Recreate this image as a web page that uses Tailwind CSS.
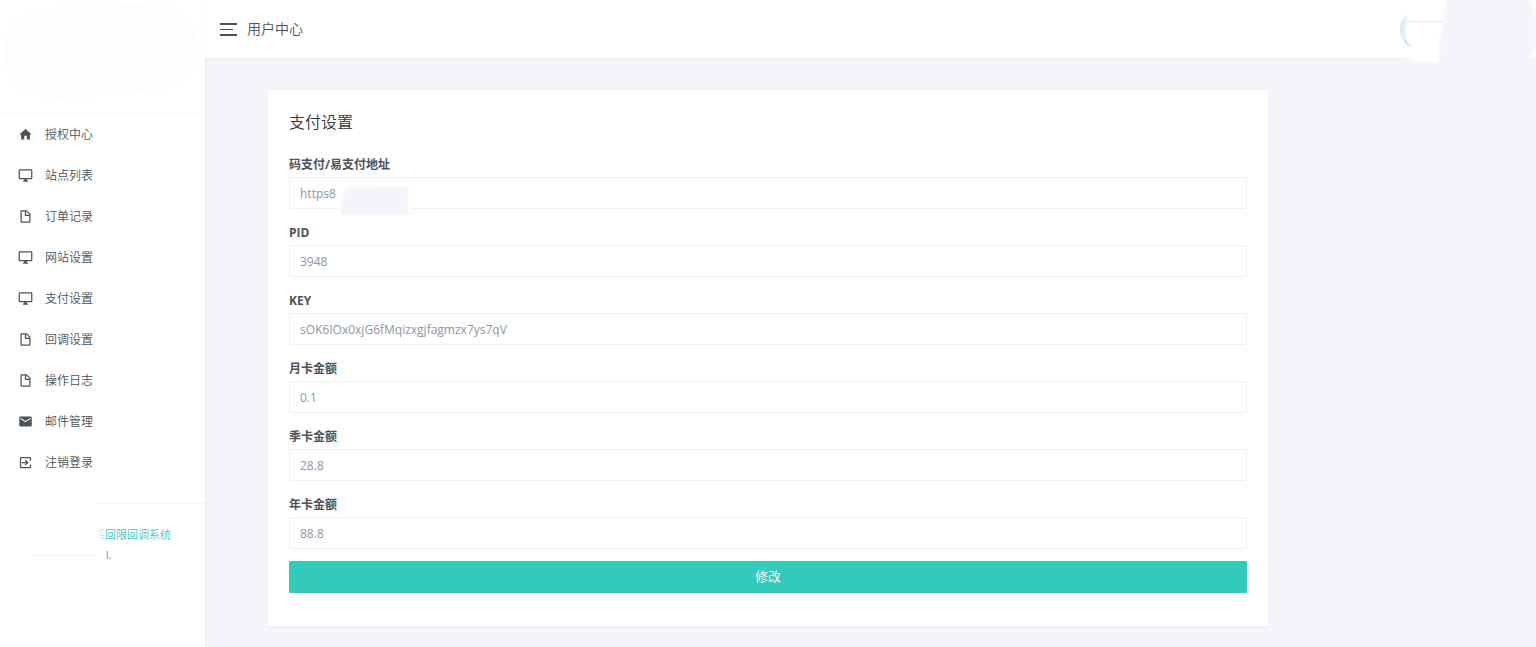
<!DOCTYPE html>
<html lang="zh-CN">

<head>
    <meta charset="UTF-8" />
    <meta name="viewport" content="width=device-width, initial-scale=1.0" />
    <title>用户中心 - 支付设置</title>
    <script src="https://cdn.jsdelivr.net/npm/@tailwindcss/browser@4"></script>
</head>

<body class="flex min-h-screen bg-[#f4f5fa] font-['Open_Sans','Noto_Sans_CJK_SC',sans-serif] text-xs font-[350] text-[#4d5259]">
    <!-- Icons -->
    <svg class="hidden">
        <symbol id="home" viewBox="0 0 24 24"><path d="M10 20v-6h4v6h5v-8h3L12 3 2 12h3v8z" /></symbol>
        <symbol id="monitor" viewBox="0 0 24 24"><path d="M21 16H3V4h18m0-2H3c-1.100 0-2 .9-2 2v12a2 2 0 0 0 2 2h7v2H8v2h8v-2h-2v-2h7a2 2 0 0 0 2-2V4a2 2 0 0 0-2-2z" /></symbol>
        <symbol id="file" viewBox="0 0 24 24"><path d="M13 9h5.500L13 3.500V9M6 2h8l6 6v12a2 2 0 0 1-2 2H6a2 2 0 0 1-2-2V4c0-1.110.89-2 2-2m5 2H6v16h12v-9h-7V4z" /></symbol>
        <symbol id="email" viewBox="0 0 24 24"><path d="M20 8l-8 5-8-5V6l8 5 8-5m0-2H4c-1.110 0-2 .89-2 2v12a2 2 0 0 0 2 2h16a2 2 0 0 0 2-2V6a2 2 0 0 0-2-2z" /></symbol>
        <symbol id="logout" viewBox="0 0 24 24"><path d="M21 9V5a2 2 0 0 0-2-2H5a2 2 0 0 0-2 2v14a2 2 0 0 0 2 2h14a2 2 0 0 0 2-2v-4h-2v4H5V5h14v4zM12.500 7.500L11 9l2 2H6v2h7l-2 2 1.500 1.500L17 12z" /></symbol>
    </svg>

    <!-- Sidebar -->
    <aside class="w-[205px] shrink-0 bg-white shadow-[0_0_4px_rgba(0,0,0,0.06)]">
        <div class="h-[113px] border-b border-[#f9f9fa]">
            <svg class="h-[104px] w-[205px]" viewBox="0 0 205 104">
                <path d="M40 8Q90 6 150 3Q196 4 199 50Q196 84 160 90Q120 94 60 100Q8 98 3 55Q6 14 40 8z" fill="#fdfdfd" />
            </svg>
        </div>
        <nav class="h-[390px] pt-px">
            <a href="#" class="flex h-[41px] items-center gap-3 pl-[18px]"><svg class="size-[15px] fill-current"><use href="#home" /></svg>授权中心</a>
            <a href="#" class="flex h-[41px] items-center gap-3 pl-[18px]"><svg class="size-[15px] fill-current"><use href="#monitor" /></svg>站点列表</a>
            <a href="#" class="flex h-[41px] items-center gap-3 pl-[18px]"><svg class="size-[15px] fill-current"><use href="#file" /></svg>订单记录</a>
            <a href="#" class="flex h-[41px] items-center gap-3 pl-[18px]"><svg class="size-[15px] fill-current"><use href="#monitor" /></svg>网站设置</a>
            <a href="#" class="flex h-[41px] items-center gap-3 pl-[18px]"><svg class="size-[15px] fill-current"><use href="#monitor" /></svg>支付设置</a>
            <a href="#" class="flex h-[41px] items-center gap-3 pl-[18px]"><svg class="size-[15px] fill-current"><use href="#file" /></svg>回调设置</a>
            <a href="#" class="flex h-[41px] items-center gap-3 pl-[18px]"><svg class="size-[15px] fill-current"><use href="#file" /></svg>操作日志</a>
            <a href="#" class="flex h-[41px] items-center gap-3 pl-[18px]"><svg class="size-[15px] fill-current"><use href="#email" /></svg>邮件管理</a>
            <a href="#" class="flex h-[41px] items-center gap-3 pl-[18px]"><svg class="size-[15px] fill-current"><use href="#logout" /></svg>注销登录</a>
        </nav>
        <div class="ml-24 h-px bg-[#f3f4f5]"></div>
        <div class="relative pt-[21px] pl-[94px] leading-5">
            <a href="#" class="block text-[11px] text-[#33cabb]">系回限回调系统</a>
            <p class="pl-3 text-[10px] font-normal text-[#777]">l.</p>
            <span class="absolute top-5 left-[90px] h-5 w-4 bg-linear-to-r from-white from-50% to-white/0"></span>
        </div>
        <div class="-mt-[10px] ml-8 h-px w-16 bg-[#f3f4f5]"></div>
    </aside>

    <div class="min-w-0 flex-1">
        <!-- Header -->
        <header class="relative flex h-[58px] items-center bg-white pl-[15px] shadow-[0_1px_2px_rgba(0,0,0,0.04)]">
            <button type="button" aria-label="菜单" class="flex w-[17px] flex-col gap-1">
                <span class="h-0.5 w-full bg-[#4d5259]"></span>
                <span class="h-px w-[13px] bg-[#4d5259]"></span>
                <span class="h-0.5 w-full bg-[#4d5259]"></span>
            </button>
            <span class="pl-[10px] text-sm">用户中心</span>
            <svg class="absolute top-0 right-0 h-16 w-[140px]" viewBox="0 0 140 64">
                <defs>
                    <filter id="soft"><feGaussianBlur stdDeviation="1" /></filter>
                    <linearGradient id="ring"><stop offset="0" stop-color="#cfe4f8" /><stop offset="1" stop-color="#fff" /></linearGradient>
                </defs>
                <path d="M12 50H46V62H20Q12 62 10 57z" fill="#fff" filter="url(#soft)" />
                <path d="M14 13Q4 18 4 29Q4 39 12 46Q7 30 14 13z" fill="url(#ring)" />
                <path d="M8 21.500H48" stroke="#ececf0" />
                <path d="M9 41l5 5" stroke="#d9cccc" stroke-width="2" stroke-dasharray="2 1" />
                <path d="M49-4Q49 20 44 36L43 64H145V58Q136 58 133 57Q136 54 140 48V10Q136 2 128-4z" fill="#f4f5fa" filter="url(#soft)" />
            </svg>
        </header>

        <!-- Payment settings -->
        <main class="pt-8 pl-[63px]">
            <form class="max-w-[1000px] bg-white px-[21px] pt-5 pb-[33px] shadow-[0_1px_3px_rgba(0,0,0,0.04)]">
                <h1 class="mb-[19px] text-base leading-6 text-[#313944]">支付设置</h1>

                <label for="url" class="block leading-6 font-bold">码支付/易支付地址</label>
                <div class="relative mb-3">
                    <input id="url" type="text" value="https8" class="block h-8 w-full rounded-xs border border-[#efefef] px-[10px] font-normal text-[#8b95a5]" />
                    <svg class="absolute top-0 left-11 h-10 w-20" viewBox="0 0 80 40">
                        <path d="M12 2H78V34H4z" fill="#fff" filter="url(#soft)" />
                        <path d="M13 11L75 9V38H7L9 24z" fill="#f4f5fa" filter="url(#soft)" />
                    </svg>
                </div>

                <label for="pid" class="block leading-6 font-bold">PID</label>
                <input id="pid" type="text" value="3948" class="mb-3 block h-8 w-full rounded-xs border border-[#efefef] px-[10px] font-normal text-[#8b95a5]" />

                <label for="key" class="block leading-6 font-bold">KEY</label>
                <input id="key" type="text" value="sOK6IOx0xjG6fMqizxgjfagmzx7ys7qV" class="mb-3 block h-8 w-full rounded-xs border border-[#efefef] px-[10px] font-normal text-[#8b95a5]" />

                <label for="month" class="block leading-6 font-bold">月卡金额</label>
                <input id="month" type="text" value="0.1" class="mb-3 block h-8 w-full rounded-xs border border-[#efefef] px-[10px] font-normal text-[#8b95a5]" />

                <label for="season" class="block leading-6 font-bold">季卡金额</label>
                <input id="season" type="text" value="28.8" class="mb-3 block h-8 w-full rounded-xs border border-[#efefef] px-[10px] font-normal text-[#8b95a5]" />

                <label for="year" class="block leading-6 font-bold">年卡金额</label>
                <input id="year" type="text" value="88.8" class="mb-3 block h-8 w-full rounded-xs border border-[#efefef] px-[10px] font-normal text-[#8b95a5]" />

                <button type="submit" class="block h-8 w-full rounded-[1px] bg-[#33cabb] text-[13px] text-white">修改</button>
            </form>
        </main>
    </div>
</body>

</html>
